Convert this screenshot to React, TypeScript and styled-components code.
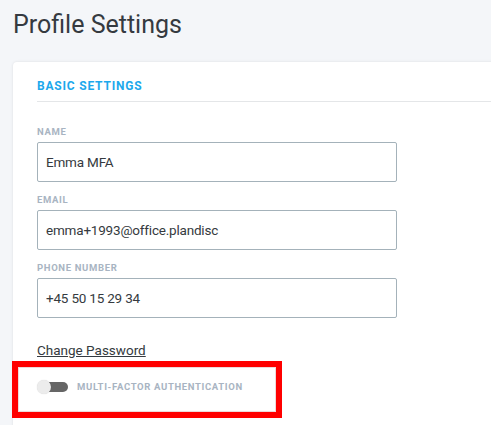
import React from "react";
import styled, { createGlobalStyle } from "styled-components";

const Global = createGlobalStyle`
  html, body {
    margin: 0;
    padding: 0;
    background: #f4f6f9;
    overflow: hidden;
    font-family: Roboto, Inter, sans-serif;
  }
`;

const Page = styled.div`
  padding: 10px 0 0 13px;
`;

const Title = styled.h1`
  margin: 0;
  font-size: 25px;
  line-height: 29px;
  font-weight: 400;
  color: #353a40;
`;

const Card = styled.section`
  margin-top: 23px;
  width: 540px;
  background: #fff;
  border-radius: 4px;
  box-shadow: 0 0 3px rgba(0, 0, 0, 0.1);
  padding: 0 0 20px 24px;
`;

const CardHeader = styled.h2`
  margin: 0;
  padding: 16px 0 7px;
  border-bottom: 1px solid #e4e6e8;
  font-size: 12px;
  line-height: 16px;
  font-weight: 700;
  letter-spacing: 0.8px;
  color: #1ca8ec;
  text-transform: uppercase;
`;

const Form = styled.div`
  display: flex;
  flex-direction: column;
  padding-top: 23px;
`;

const Field = styled.label`
  display: flex;
  flex-direction: column;
  gap: 4px;
  margin-bottom: 11px;
`;

const Label = styled.span`
  font-size: 9.5px;
  line-height: 13px;
  font-weight: 700;
  letter-spacing: 0.65px;
  color: #a8b4c2;
  text-transform: uppercase;
`;

const Input = styled.input`
  box-sizing: border-box;
  width: 360px;
  height: 40px;
  padding: 0 8px;
  border: 1px solid #a4b2ba;
  border-radius: 2px;
  font-family: inherit;
  font-size: 13.5px;
  letter-spacing: -0.2px;
  color: #353a40;
  background: #fff;
  outline: none;
`;

const Link = styled.a`
  margin-top: 12px;
  align-self: flex-start;
  font-size: 13.5px;
  line-height: 18px;
  color: #353a40;
  text-decoration: underline;
  cursor: pointer;
`;

const Highlight = styled.div`
  margin: 2px 0 0 -25px;
  width: 258px;
  border: 6px solid #ff0000;
`;

const MfaRow = styled.div`
  display: flex;
  align-items: center;
  gap: 9px;
  padding: 12px 0 17px 18px;
  border: 1px solid #eddada;
`;

const Toggle = styled.span`
  position: relative;
  width: 31px;
  height: 14px;
  display: inline-block;
  flex: none;
`;

const Track = styled.span`
  position: absolute;
  left: 5px;
  right: 0;
  top: 2px;
  height: 10px;
  border-radius: 5px;
  background: #666;
`;

const Knob = styled.span`
  position: absolute;
  left: 0;
  top: 0;
  width: 14px;
  height: 14px;
  border-radius: 50%;
  background: #ececec;
  box-shadow: 0 0 1px rgba(0, 0, 0, 0.2);
`;

const MfaText = styled.span`
  font-size: 9.5px;
  line-height: 14px;
  font-weight: 700;
  letter-spacing: 0.65px;
  color: #a8b4c2;
  text-transform: uppercase;
`;

const fields = [
  { label: "Name", value: "Emma MFA" },
  { label: "Email", value: "emma+1993@office.plandisc" },
  { label: "Phone Number", value: "+45 50 15 29 34" },
];

export default function App() {
  return (
    <Page>
      <Global />
      <Title>Profile Settings</Title>
      <Card>
        <CardHeader>Basic Settings</CardHeader>
        <Form>
          {fields.map((f) => (
            <Field key={f.label}>
              <Label>{f.label}</Label>
              <Input defaultValue={f.value} />
            </Field>
          ))}
          <Link>Change Password</Link>
          <Highlight>
            <MfaRow>
              <Toggle>
                <Track />
                <Knob />
              </Toggle>
              <MfaText>Multi-Factor Authentication</MfaText>
            </MfaRow>
          </Highlight>
        </Form>
      </Card>
    </Page>
  );
}
